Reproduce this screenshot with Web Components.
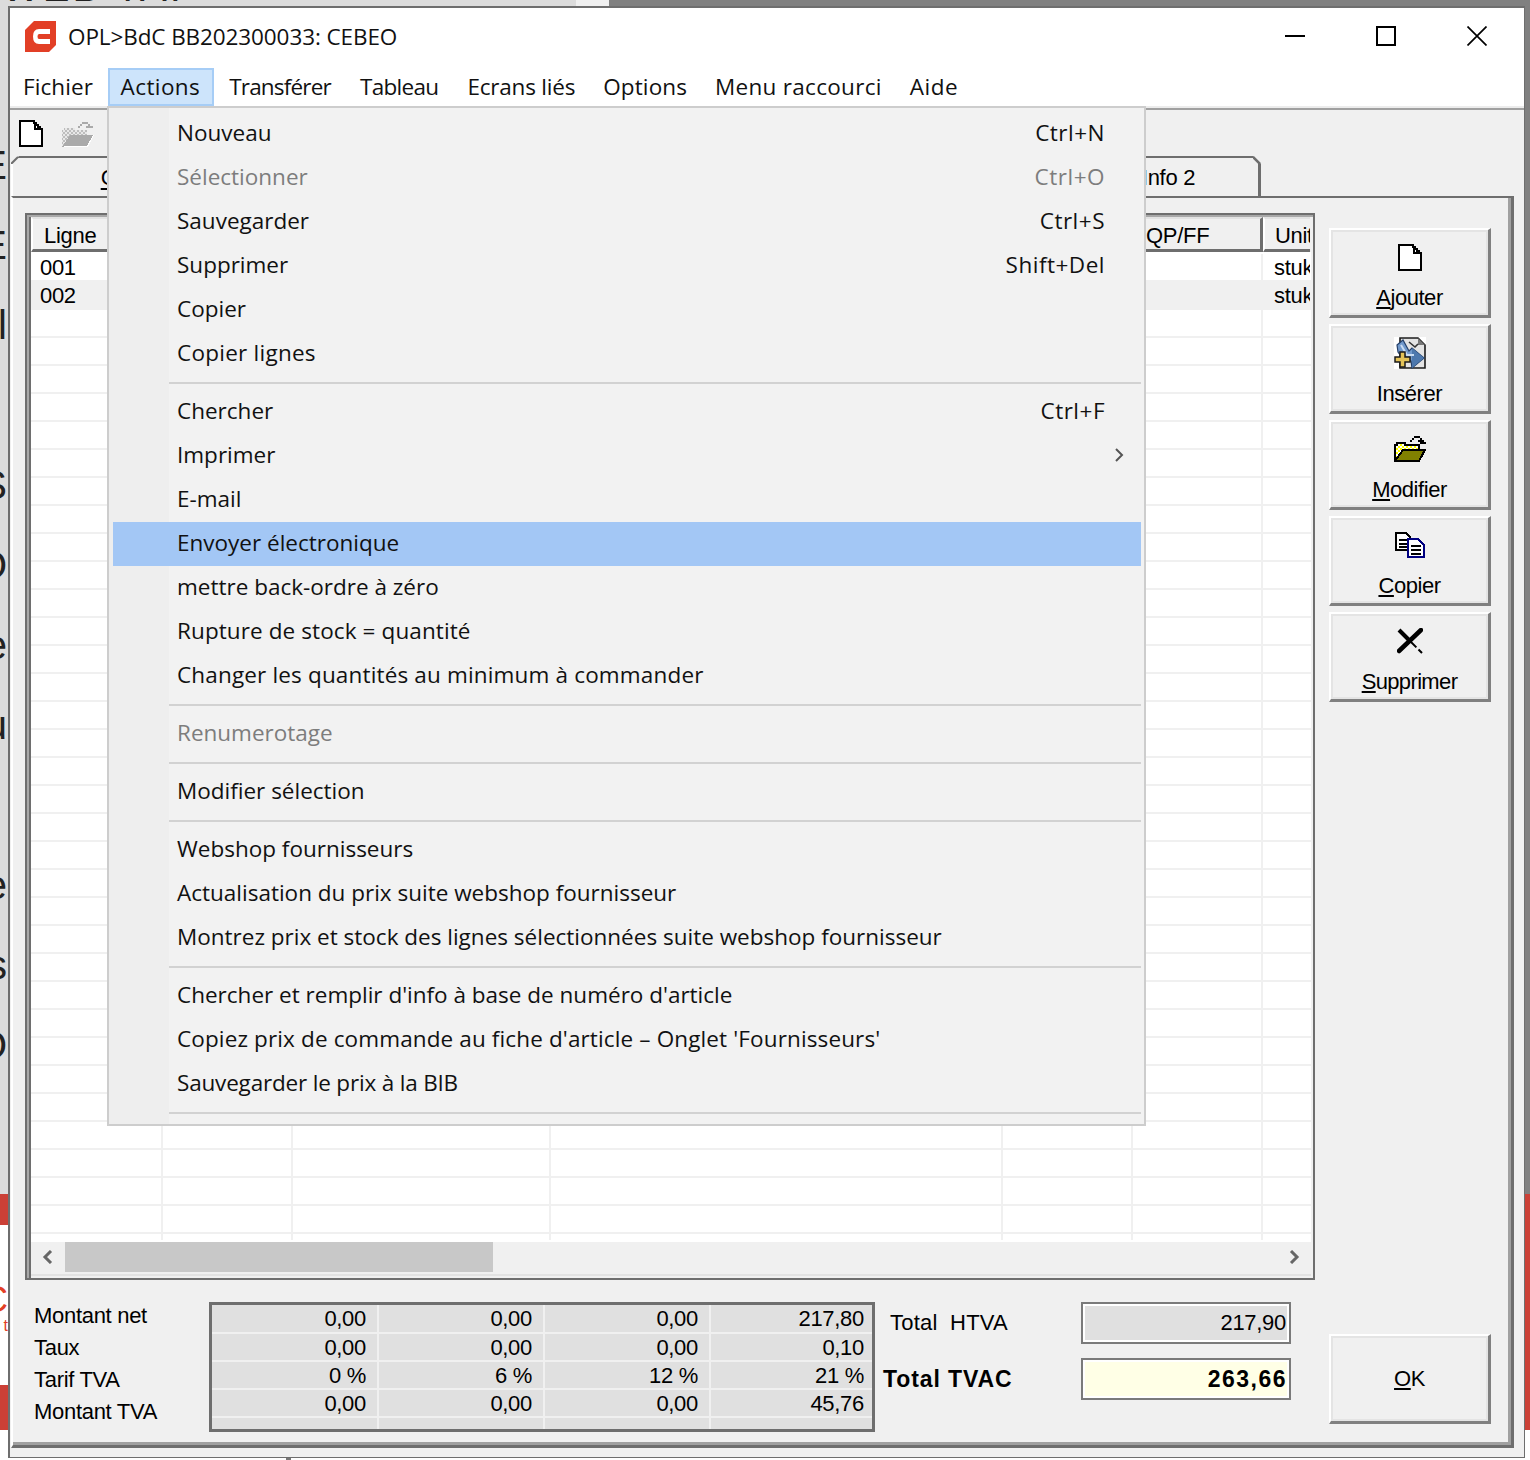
<!DOCTYPE html>
<html>
<head>
<meta charset="utf-8">
<title>OPL</title>
<style>
  html, body { margin: 0; padding: 0; background: #fff; }
  body { width: 1530px; height: 1460px; overflow: hidden; }
</style>
</head>
<body>
<desk-top></desk-top>

<script>
const UI_FONT = '"Open Sans", "Noto Sans", sans-serif';
const OLD_FONT = '"Liberation Sans", Arial, sans-serif';

// little helper, every element is only a shadow root with fixed markup
function element(name, html, extra) {
  const tpl = document.createElement('template');
  tpl.innerHTML = html;
  customElements.define(name, class extends HTMLElement {
    constructor() {
      super();
      this.attachShadow({ mode: 'open' });
      this.shadowRoot.appendChild(tpl.content.cloneNode(true));
      if (extra) extra(this);
    }
  });
}

const ICONS = {
  doc: `<svg width="24" height="27" viewBox="0 0 24 27" shape-rendering="crispEdges"><path d="M1 1H15V3H17V5H19V7H21V9H23V26H1Z" fill="#fff" stroke="#000" stroke-width="2"/><path d="M15 2h2v6h6v2h-8z" fill="#000"/></svg>`,
  folderOff: `<svg width="33" height="27" viewBox="0 0 33 27" shape-rendering="crispEdges"><defs><pattern id="g" width="4" height="4" patternUnits="userSpaceOnUse"><rect width="4" height="4" fill="#bdbdbd"/><rect width="2" height="2" fill="#e8e8e8"/><rect x="2" y="2" width="2" height="2" fill="#e8e8e8"/></pattern></defs><path d="M1 10H3V8H14V10H26V15H9L2 26H1Z" fill="url(#g)"/><path d="M9 15H33L27 27H1Z" fill="#aaa"/><path d="M27 27H3V26H26L32 15H33Z" fill="#fff"/><path d="M17 6H19V4H21V2H27V4H29V6H32V8H25V6H27V4H21V6H19V8H17Z" fill="#aaa"/></svg>`,
  folder: `<svg width="32" height="26" viewBox="0 0 32 26" shape-rendering="crispEdges"><defs><pattern id="y" width="4" height="4" patternUnits="userSpaceOnUse"><rect width="4" height="4" fill="#ffff00"/><rect width="2" height="2" fill="#fff"/><rect x="2" y="2" width="2" height="2" fill="#fff"/></pattern></defs><path d="M1 9H3V7H11V9H25V15H9L1 25Z" fill="url(#y)" stroke="#000" stroke-width="2"/><path d="M9 14H31L25 25H1Z" fill="#808000" stroke="#000" stroke-width="2"/><path d="M16 4H18V2H20V0H26V2H28V4H30V6H32V8H26V6H24V4H26V2H20V4H18V6H16Z" fill="#000"/></svg>`,
  insert: `<svg width="32" height="32" viewBox="0 0 32 32"><rect width="32" height="32" fill="#fff"/><path d="M6 1H24L31 8V31H6Z" fill="#e4e4e4" stroke="#1a1a1a" stroke-width="1.600"/><path d="M24 1L31 8H24Z" fill="#777"/><path d="M3 8L9 3L15 14L18 11L30 21L18 31L17 24L10 23L4 15Z" fill="#7199cc" stroke="#24406b" stroke-width="1.200"/><path d="M18 11L30 21L18 31Z" fill="#4d78ad"/><path d="M7 8L13 18L20 18" fill="none" stroke="#c9dcf2" stroke-width="2"/><path d="M15 5L21 10L24 7" fill="none" stroke="#333" stroke-width="1.600"/><path d="M6 15H11V20H16V25H11V30H6V25H1V20H6Z" fill="#e2c258" stroke="#1a1a1a" stroke-width="1.500"/></svg>`,
  copy: `<svg width="30" height="26" viewBox="0 0 30 26" shape-rendering="crispEdges"><path d="M1 1H11L15 5V18H1Z" fill="#fff" stroke="#000" stroke-width="2"/><path d="M4 7H12V9H4ZM4 11H12V13H4ZM4 14H12V16H4Z" fill="#000"/><path d="M13 7H23L29 13V25H13Z" fill="#fff" stroke="#000080" stroke-width="2"/><path d="M16 13H26V15H16ZM16 17H26V19H16ZM16 21H26V23H16Z" fill="#000"/></svg>`,
  cross: `<svg width="26" height="26" viewBox="0 0 26 26"><path d="M2 23L24 2" stroke="#000" stroke-width="4.500" stroke-linecap="round"/><path d="M2 2L13 13" stroke="#000" stroke-width="4"/><path d="M13 13L25 25" stroke="#000" stroke-width="2" stroke-dasharray="9 3"/></svg>`
};

element('title-bar', `
  <style>
    :host { display: flex; align-items: center; height: 60px; background: #fff; padding: 0 0 4px 14px; box-sizing: border-box; font: 22.5px ${UI_FONT}; color: #111; }
    svg { flex: none; }
    .name { margin-left: 11px; letter-spacing: -.1px; }
    .ctl { margin-left: auto; display: flex; padding-right: 37px; }
    .ctl svg { display: block; margin-left: 71px; }
  </style>
  <svg width="33" height="33" viewBox="0 0 33 33"><path d="M10 1H32V25L25 32H1V10Z" fill="#e23f26"/><path d="M26 9H15Q9 9 9 16.500Q9 24 15 24H26V19H15Q13.500 19 13.500 16.500Q13.500 14 15 14H26Z" fill="#fff"/></svg>
  <span class="name">OPL&gt;BdC BB202300033: CEBEO</span>
  <div class="ctl">
    <svg width="20" height="20" viewBox="0 0 20 20" shape-rendering="crispEdges"><path d="M0 9H20V11H0Z" fill="#000"/></svg>
    <svg width="20" height="20" viewBox="0 0 20 20" shape-rendering="crispEdges"><path d="M1 1H19V19H1Z" fill="none" stroke="#000" stroke-width="2"/></svg>
    <svg width="20" height="20" viewBox="0 0 20 20"><path d="M0.500 0.500L19.500 19.500M19.500 0.500L0.500 19.500" stroke="#000" stroke-width="1.700"/></svg>
  </div>`);

element('menu-bar', `
  <style>
    :host { display: flex; height: 40px; background: #fff; box-sizing: border-box; border-bottom: 2px solid #ececec; font: 22.5px ${UI_FONT}; color: #111; }
    span { display: flex; align-items: center; height: 38px; box-sizing: border-box; padding: 0 14px 2px; white-space: nowrap; }
    .first { padding-left: 13px; padding-right: 14.500px; letter-spacing: .1px; }
    .on { background: #cde4fb; border: 2px solid #a6cdf6; padding: 0 12px 2px 11px; letter-spacing: .4px; }
  </style>
  <span class="first">Fichier</span><span class="on">Actions</span><span style="letter-spacing:-.8px;padding-left:15px">Transférer</span><span style="letter-spacing:-.7px;padding-left:15px">Tableau</span><span style="letter-spacing:-.2px;padding-left:15px">Ecrans liés</span><span style="letter-spacing:.1px">Options</span><span style="letter-spacing:.3px">Menu raccourci</span><span style="letter-spacing:.5px">Aide</span>`);

element('tool-bar', `
  <style>
    :host { display: flex; gap: 18px; height: 46px; box-sizing: border-box; padding: 10px 0 0 8px; }
  </style>
  ${ICONS.doc}${ICONS.folderOff}`);

element('tab-strip', `
  <style>
    :host { display: flex; justify-content: space-between; height: 40px; font: 22px ${OLD_FONT}; letter-spacing: -.3px; color: #000; }
    .tab { position: relative; box-sizing: border-box; display: flex; align-items: center; justify-content: center; height: 40px; padding-top: 2px; border-top: 2px solid #6e6e6e; background: #f0f0f0; }
    .one { width: 193px; border-left: 2px solid #fff; }
    .two { width: 182px; border-right: 3px solid #6e6e6e; margin-right: 253px; }
    svg { position: absolute; top: -2px; }
    .one svg { left: -2px; }
    .two svg { right: -3px; }
    u { text-underline-offset: 3px; }
  </style>
  <div class="tab one"><svg width="8" height="8" viewBox="0 0 8 8"><path d="M0 0H8L0 8Z" fill="#f0f0f0"/><path d="M0 8L7 1" stroke="#6e6e6e" stroke-width="2"/></svg><span><u>C</u></span></div>
  <div class="tab two"><svg width="8" height="8" viewBox="0 0 8 8"><path d="M0 0H8V8Z" fill="#f0f0f0"/><path d="M0 1L7 8" stroke="#6e6e6e" stroke-width="2.500"/></svg><span>Info 2</span></div>`);

const COLS = [132, 130, 258, 452, 130, 130, 47];

element('line-grid', `
  <style>
    :host { display: flex; flex-direction: column; box-sizing: border-box; height: 1067px; background: #fff; border: 2px solid #6e6e6e; box-shadow: inset 2px 2px 0 #a8a8a8, inset 4px 0 0 #6e6e6e, inset -2px 0 0 #f0f0f0; padding: 2px 2px 0 4px; font: 22px ${OLD_FONT}; letter-spacing: -.3px; color: #000; }
    .view { flex: 1; display: flex; flex-direction: column; overflow: hidden; }
    .head { display: flex; height: 35px; flex: none; background: #f0f0f0; border-bottom: 2px solid #fff; }
    .head div { box-sizing: border-box; height: 35px; flex: none; border-top: 2px solid #e2e2e2; border-left: 2px solid #fff; border-right: 3px solid #6e6e6e; border-bottom: 3px solid #6e6e6e; padding: 3px 0 0 11px; display: flex; align-items: center; overflow: hidden; white-space: nowrap; }
    .head div:last-child { border-right: 0; padding-left: 10px; }
    .body { height: 986px; flex: none; overflow: hidden; }
    .row { display: flex; height: 28px; box-sizing: border-box; border-bottom: 2px solid #f0f0f0; }
    .row.alt { background: #f0f0f0; }
    .row div { flex: none; box-sizing: border-box; border-right: 2px solid #f0f0f0; padding-left: 9px; line-height: 28px; overflow: hidden; white-space: nowrap; }
    .row div:last-child { border-right: 0; padding-left: 11px; }
    .scroll { height: 36px; flex: none; margin-top: 2px; background: #f0f0f0; box-sizing: border-box; box-shadow: inset 0 -2px 0 #f0f0f0, inset 0 -4px 0 #e2e2e2; display: flex; align-items: flex-start; }
    .arrow { width: 34px; height: 30px; flex: none; display: flex; align-items: center; justify-content: center; }
    .thumb { width: 428px; height: 30px; background: #c8c8c8; flex: none; }
    .gap { flex: 1; }
  </style>
  <div class="view">
    <div class="head"></div>
    <div class="body"></div>
    <div class="scroll">
      <div class="arrow"><svg width="12" height="14" viewBox="0 0 12 14"><path d="M9 1L3 7L9 13" fill="none" stroke="#666" stroke-width="3"/></svg></div>
      <div class="thumb"></div>
      <div class="gap"></div>
      <div class="arrow"><svg width="12" height="14" viewBox="0 0 12 14"><path d="M3 1L9 7L3 13" fill="none" stroke="#666" stroke-width="3"/></svg></div>
    </div>
  </div>`, (el) => {
  const head = el.shadowRoot.querySelector('.head');
  ['Ligne', '', '', '', '', 'QP/FF', 'Unit'].forEach((t, i) => {
    const c = document.createElement('div');
    c.style.width = COLS[i] + 'px';
    c.textContent = t;
    head.appendChild(c);
  });
  const body = el.shadowRoot.querySelector('.body');
  for (let r = 0; r < 36; r++) {
    const row = document.createElement('div');
    row.className = 'row' + (r === 1 ? ' alt' : '');
    COLS.forEach((w, i) => {
      const c = document.createElement('div');
      c.style.width = w + 'px';
      if (r < 2 && i === 0) c.textContent = '00' + (r + 1);
      if (r < 2 && i === 6) c.textContent = 'stuk';
      row.appendChild(c);
    });
    body.appendChild(row);
  }
});

element('side-button', `
  <style>
    :host { display: flex; flex-direction: column; align-items: center; box-sizing: border-box; width: 162px; height: 90px; padding-top: 11px; background: #f0f0f0; border: 2px solid; border-width: 2px 3px 3px 2px; border-color: #fff #808080 #808080 #fff; box-shadow: inset 2px 2px 0 #e4e4e4, inset -2px -2px 0 #e4e4e4; font: 22px ${OLD_FONT}; letter-spacing: -.45px; color: #000; }
    :host([plain]) { justify-content: center; padding: 0; margin-top: auto; }
    :host([plain]) .icon { display: none; }
    :host([plain]) .label { margin-top: 0; }
    .icon { height: 32px; display: flex; align-items: center; justify-content: center; }
    ::slotted(span) { display: flex; }
    .label { margin-top: 12px; line-height: 26px; }
  </style>
  <div class="icon"><slot name="icon"></slot></div>
  <div class="label"><slot></slot></div>`);

element('sum-grid', `
  <style>
    :host { display: grid; grid-template-columns: 165px 164px 164px 1fr; grid-template-rows: 27px 26px 26px 26px 1fr; gap: 2px; box-sizing: border-box; width: 666px; height: 130px; background: #f0f0f0; border: 3px solid #6e6e6e; font: 22px ${OLD_FONT}; letter-spacing: -.3px; color: #000; }
    div { background: #e0e0e0; text-align: right; padding-right: 11px; line-height: 27px; white-space: nowrap; }
    div:nth-of-type(4n) { padding-right: 8px; }
  </style>
  <div>0,00</div><div>0,00</div><div>0,00</div><div>217,80</div>
  <div>0,00</div><div>0,00</div><div>0,00</div><div>0,10</div>
  <div>0 %</div><div>6 %</div><div>12 %</div><div>21 %</div>
  <div>0,00</div><div>0,00</div><div>0,00</div><div>45,76</div>
  <div></div><div></div><div></div><div></div>`);

element('sum-totals', `
  <style>
    :host { display: grid; grid-template-columns: 198px 210px; grid-auto-rows: 42px; row-gap: 14px; margin-left: 8px; font: 22px ${OLD_FONT}; letter-spacing: -.3px; color: #000; }
    .lab { display: flex; align-items: center; padding-left: 7px; letter-spacing: .2px; }
    .lab.big { padding-left: 0; font-weight: bold; font-size: 23px; letter-spacing: .9px; }
    .val { box-sizing: border-box; border: 2px solid #7a7a7a; box-shadow: inset 0 0 0 2px #fff; background: #e0e0e0; display: flex; align-items: center; justify-content: flex-end; padding-right: 3px; }
    .val.big { background: #ffffe6; font-weight: bold; letter-spacing: 1.500px; font-size: 23px; padding-right: 2px; }
  </style>
  <div class="lab">Total&nbsp; HTVA</div><div class="val">217,90</div>
  <div class="lab big">Total TVAC</div><div class="val big">263,66</div>`);

element('tab-panel', `
  <style>
    :host { display: flex; flex: 1; min-height: 0; box-sizing: border-box; background: #f0f0f0; border-top: 2px solid #6e6e6e; border-left: 2px solid #fff; border-right: 3px solid #6e6e6e; border-bottom: 3px solid #6e6e6e; box-shadow: inset -3px -3px 0 #a0a0a0; padding: 15px 17px 10px 12px; gap: 14px; font: 22px ${OLD_FONT}; letter-spacing: -.3px; color: #000; }
    .main { width: 1290px; display: flex; flex-direction: column; gap: 22px; }
    .sum { display: flex; }
    .labels { width: 184px; padding-left: 9px; box-sizing: border-box; margin-top: -2px; line-height: 32px; }
    .side { width: 162px; padding: 15px 0 11px; display: flex; flex-direction: column; gap: 6px; }
  </style>
  <div class="main">
    <line-grid></line-grid>
    <div class="sum">
      <div class="labels">Montant net<br>Taux<br>Tarif TVA<br>Montant TVA</div>
      <sum-grid></sum-grid>
      <sum-totals></sum-totals>
    </div>
  </div>
  <div class="side">
    <side-button><span slot="icon">${ICONS.doc}</span><u>A</u>jouter</side-button>
    <side-button><span slot="icon">${ICONS.insert}</span>Insérer</side-button>
    <side-button><span slot="icon">${ICONS.folder}</span><u>M</u>odifier</side-button>
    <side-button><span slot="icon">${ICONS.copy}</span><u>C</u>opier</side-button>
    <side-button style="letter-spacing:-.65px"><span slot="icon">${ICONS.cross}</span><u>S</u>upprimer</side-button>
    <side-button plain><u>O</u>K</side-button>
  </div>`);

element('menu-row', `
  <style>
    :host { display: flex; align-items: center; justify-content: space-between; height: 44px; box-sizing: border-box; padding: 0 36px 2px 64px; position: relative; white-space: nowrap; }
    :host([off]) { color: #7d7d7d; }
    :host([on]) { background: #a3c7f5; margin: 1px 0 -1px; padding-bottom: 4px; }
    ::slotted(span) { letter-spacing: .5px; }
    svg { position: absolute; right: 17px; top: 15px; }
  </style>
  <slot></slot><slot name="key"></slot>`, (el) => {
  if (el.hasAttribute('sub')) {
    el.shadowRoot.innerHTML += `<svg width="10" height="14" viewBox="0 0 10 14"><path d="M2 1L8 7L2 13" fill="none" stroke="#555" stroke-width="2"/></svg>`;
  }
});

element('menu-line', `
  <style>
    :host { display: block; height: 14px; box-sizing: border-box; padding: 7px 0 5px 56px; }
    div { height: 2px; background: #d2d2d2; }
  </style>
  <div></div>`);

element('action-menu', `
  <style>
    :host { position: absolute; left: 97px; top: 98px; width: 1039px; height: 1020px; box-sizing: border-box; border: 2px solid #cdcdcd; padding: 3px 3px 5px 4px; background: linear-gradient(90deg, #eeeeee 60px, #f2f2f2 60px); font: 22.5px ${UI_FONT}; color: #111; }
  </style>
  <slot></slot>`);

element('app-window', `
  <style>
    :host { position: absolute; left: 8px; top: 6px; width: 1517px; height: 1452px; box-sizing: border-box; display: flex; flex-direction: column; border: solid #6e6e6e; border-width: 2px 1px 1px 2px; background: #f0f0f0; }
    .rule { height: 2px; background: #a0a0a0; flex: none; }
    .client { flex: 1; min-height: 0; display: flex; flex-direction: column; padding: 0 10px 9px 1px; }
  </style>
  <title-bar></title-bar>
  <menu-bar></menu-bar>
  <div class="rule"></div>
  <div class="client">
    <tool-bar></tool-bar>
    <tab-strip></tab-strip>
    <tab-panel></tab-panel>
  </div>
  <action-menu>
    <menu-row>Nouveau<span slot="key">Ctrl+N</span></menu-row>
    <menu-row off>Sélectionner<span slot="key">Ctrl+O</span></menu-row>
    <menu-row>Sauvegarder<span slot="key">Ctrl+S</span></menu-row>
    <menu-row>Supprimer<span slot="key">Shift+Del</span></menu-row>
    <menu-row>Copier</menu-row>
    <menu-row style="letter-spacing:.25px">Copier lignes</menu-row>
    <menu-line></menu-line>
    <menu-row>Chercher<span slot="key">Ctrl+F</span></menu-row>
    <menu-row sub>Imprimer</menu-row>
    <menu-row>E-mail</menu-row>
    <menu-row on>Envoyer électronique</menu-row>
    <menu-row>mettre back-ordre à zéro</menu-row>
    <menu-row style="letter-spacing:.1px">Rupture de stock = quantité</menu-row>
    <menu-row style="letter-spacing:.16px">Changer les quantités au minimum à commander</menu-row>
    <menu-line></menu-line>
    <menu-row off>Renumerotage</menu-row>
    <menu-line></menu-line>
    <menu-row>Modifier sélection</menu-row>
    <menu-line></menu-line>
    <menu-row>Webshop fournisseurs</menu-row>
    <menu-row>Actualisation du prix suite webshop fournisseur</menu-row>
    <menu-row>Montrez prix et stock des lignes sélectionnées suite webshop fournisseur</menu-row>
    <menu-line></menu-line>
    <menu-row>Chercher et remplir d'info à base de numéro d'article</menu-row>
    <menu-row style="letter-spacing:.13px">Copiez prix de commande au fiche d'article – Onglet 'Fournisseurs'</menu-row>
    <menu-row style="letter-spacing:-.18px">Sauvegarder le prix à la BIB</menu-row>
    <menu-line></menu-line>
  </action-menu>`);

// whatever is lying behind the window on the screen
element('desk-top', `
  <style>
    :host { display: block; position: relative; width: 1530px; height: 1460px; overflow: hidden; background: #fff; }
    .left { position: absolute; left: 0; top: 0; width: 8px; height: 1194px; background: #dcdcdc; overflow: hidden; }
    .low { position: absolute; left: 0; top: 1270px; width: 8px; height: 70px; overflow: hidden; color: #e23f26; }
    .frag { position: absolute; right: 1px; font: 40px ${OLD_FONT}; line-height: 80px; color: #222; }
    .low .frag { color: #e23f26; right: 0; }
    .top { position: absolute; left: 0; top: 0; width: 1530px; height: 6px; background: linear-gradient(90deg, #dcdcdc 576px, #f0f0f0 576px, #f0f0f0 609px, #808080 609px); overflow: hidden; font: 40px ${OLD_FONT}; color: #222; }
    .top span { position: absolute; left: 2px; bottom: -1px; line-height: 1; white-space: nowrap; letter-spacing: 3px; }
    .right { position: absolute; left: 1525px; top: 0; width: 5px; height: 1194px; background: #808080; }
    .red1 { position: absolute; left: 0; top: 1194px; width: 8px; height: 31px; background: #cb4036; }
    .red2 { position: absolute; left: 0; top: 1385px; width: 8px; height: 45px; background: #cb4036; }
    .red3 { position: absolute; left: 1525px; top: 1194px; width: 5px; height: 236px; background: #cb4036; }
    .tick { position: absolute; left: 286px; top: 1458px; width: 5px; height: 2px; background: #777; }
  </style>
  <div class="left">
    <span class="frag" style="top:125px">E</span>
    <span class="frag" style="top:205px">E</span>
    <span class="frag" style="top:285px">l</span>
    <span class="frag" style="top:445px">S</span>
    <span class="frag" style="top:525px">O</span>
    <span class="frag" style="top:605px">e</span>
    <span class="frag" style="top:685px">u</span>
    <span class="frag" style="top:845px">e</span>
    <span class="frag" style="top:925px">s</span>
    <span class="frag" style="top:1005px">O</span>
  </div>
  <div class="low">
    <span class="frag" style="top:-10px;font-size:36px">C</span>
    <span class="frag" style="top:16px;font-size:16px">t</span>
  </div>
  <div class="top"><span>WEB TAI</span></div>
  <div class="right"></div>
  <div class="red1"></div><div class="red2"></div><div class="red3"></div>
  <div class="tick"></div>
  <app-window></app-window>`);
</script>
</body>
</html>
